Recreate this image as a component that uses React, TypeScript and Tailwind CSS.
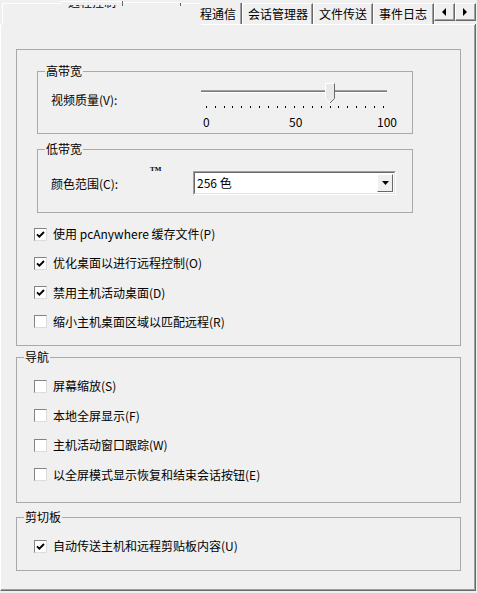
import React from "react";

const FONT = "font-['Noto_Sans_CJK_SC','Microsoft_YaHei',sans-serif]";

function CheckBox({ checked }: { checked?: boolean }) {
  return (
    <span className="w-[13px] h-[13px] shrink-0 bg-white border border-t-[#838383] border-l-[#838383] border-r-[#dcdcdc] border-b-[#dcdcdc] flex items-center justify-center">
      {checked && (
        <svg width="9" height="9" viewBox="0 0 9 9">
          <path d="M1 4.3 L3.4 6.7 L8 2" fill="none" stroke="#000" strokeWidth="1.9" />
        </svg>
      )}
    </span>
  );
}

function CheckRow({ label, checked }: { label: string; checked?: boolean }) {
  return (
    <div className="h-[16px] flex items-center gap-[6px] pl-[17px]">
      <CheckBox checked={checked} />
      <span className="whitespace-nowrap">{label}</span>
    </div>
  );
}

function GroupBox({
  title,
  className,
  children,
}: {
  title?: string;
  className?: string;
  children?: React.ReactNode;
}) {
  return (
    <div className={`relative border border-[#a9a9a9] ${className ?? ""}`}>
      {title && (
        <span className="absolute left-[7px] top-[-9px] px-px bg-[#f0f0f0] whitespace-nowrap">
          {title}
        </span>
      )}
      {children}
    </div>
  );
}

function Tab({ label, className }: { label: string; className: string }) {
  return (
    <div
      className={`h-[21px] flex items-center border-t border-l border-white border-r border-r-[#696969] shadow-[inset_-1px_0_0_#a0a0a0] whitespace-nowrap ${className}`}
    >
      {label}
    </div>
  );
}

function ArrowButton({ dir }: { dir: "left" | "right" }) {
  return (
    <div className="w-[21px] h-[18px] mb-[3px] flex items-center justify-center border-t border-l border-white border-r border-b border-r-[#696969] border-b-[#696969] shadow-[inset_-1px_-1px_0_#a0a0a0]">
      <svg width="5" height="8" viewBox="0 0 5 8">
        {dir === "left" ? (
          <path d="M4 0 L0 4 L4 8 Z" fill="#000" />
        ) : (
          <path d="M0 0 L4 4 L0 8 Z" fill="#000" />
        )}
      </svg>
    </div>
  );
}

function Slider() {
  const ticks = Array.from({ length: 21 }, (_, i) => 7 + i * 8.83);
  return (
    <div className="relative w-[200px] h-[52px] mt-[7px]">
      <svg width="200" height="32" viewBox="0 0 200 32" className="absolute left-0 top-0">
        <rect x="2" y="11" width="186" height="1" fill="#a0a0a0" />
        <rect x="2" y="12" width="186" height="1" fill="#7a7a7a" />
        <rect x="2" y="13" width="186" height="1" fill="#ffffff" />
        {ticks.map((x, i) => (
          <rect key={i} x={Math.round(x)} y="27" width="1" height="2" fill="#000" />
        ))}
        <path d="M126.5 4.5 H135.5 V19.5 L131 24 L126.5 19.5 Z" fill="#e9e9e9" stroke="#ffffff" />
        <path d="M135.5 4.5 V19.5 L131 24" fill="none" stroke="#696969" />
      </svg>
      <span className="absolute left-[4px] top-[35px] leading-[16px]">0</span>
      <span className="absolute left-[90px] top-[35px] leading-[16px]">50</span>
      <span className="absolute left-[178px] top-[35px] leading-[16px]">100</span>
    </div>
  );
}

function ComboBox({ value }: { value: string }) {
  return (
    <div className="w-[203px] h-[24px] mt-[21px] flex border border-t-[#a0a0a0] border-l-[#a0a0a0] border-r-white border-b-white">
      <div className="flex-1 flex bg-white border border-t-[#696969] border-l-[#696969] border-r-[#e3e3e3] border-b-[#e3e3e3] p-px">
        <span className="flex-1 pl-[1px] leading-[18px]">{value}</span>
        <div className="w-[16px] h-[18px] flex items-center justify-center bg-[#f0f0f0] border-t border-l border-white border-r border-b border-r-[#696969] border-b-[#696969]">
          <svg width="7" height="4" viewBox="0 0 7 4">
            <path d="M0 0 H7 L3.5 4 Z" fill="#000" />
          </svg>
        </div>
      </div>
    </div>
  );
}

export default function App() {
  return (
    <div className={`w-[477px] h-[593px] overflow-hidden bg-[#f0f0f0] text-black text-[12px] leading-[16px] ${FONT}`}>
      {/* tab strip */}
      <div className="relative h-[24px] flex items-end">
        <div className="w-[200px] h-full shrink-0">
          <div className="absolute left-[2px] top-[3px] w-px h-[21px] bg-white" />
          <div className="absolute left-[2px] top-[3px] w-[59px] h-px bg-white" />
          <div className="absolute left-[61px] top-[1px] w-[61px] h-px bg-white" />
          <div className="absolute left-[122px] top-[1px] w-px h-[5px] bg-[#696969]" />
          <div className="absolute left-[68px] top-[5px] w-[48px] h-[3px] overflow-hidden">
            <span className="absolute left-0 top-[-11px] whitespace-nowrap">远程控制</span>
          </div>
          <div className="absolute left-[123px] top-[2px] w-[57px] h-px bg-white" />
          <div className="absolute left-[180px] top-[3px] w-px h-[3px] bg-[#696969]" />
          <div className="absolute left-[182px] top-[3px] w-[18px] h-px bg-white" />
        </div>
        <div className="w-[42px] h-[21px] flex items-center justify-end pr-[5px] border-r border-r-[#696969] shadow-[inset_-1px_0_0_#a0a0a0] whitespace-nowrap">
          程通信
        </div>
        <Tab label="会话管理器" className="w-[71px] pl-[5px]" />
        <Tab label="文件传送" className="w-[60px] pl-[5px]" />
        <Tab label="事件日志" className="w-[61px] pl-[5px]" />
        <ArrowButton dir="left" />
        <ArrowButton dir="right" />
      </div>

      {/* page */}
      <div className="w-[476px] h-[567px] border-l border-white border-r border-b border-r-[#696969] border-b-[#696969] shadow-[inset_-1px_-1px_0_#a0a0a0]">
        <div className="flex h-px">
          <div className="w-[1px] bg-white" />
          <div className="w-[199px]" />
          <div className="flex-1 bg-white" />
        </div>

        <div className="pl-[15px] pt-[24px]">
          <GroupBox className="w-[445px] h-[297px] pt-[21px] pl-[20px]">
            <GroupBox title="高带宽" className="w-[376px] h-[63px] flex items-start">
              <span className="mt-[20px] pl-[13px] w-[161px] whitespace-nowrap">视频质量(V):</span>
              <Slider />
            </GroupBox>

            <GroupBox title="低带宽" className="w-[376px] h-[64px] mt-[15px] flex items-start">
              <span className="absolute left-[112px] top-[15px] text-[7px] leading-[8px] font-bold font-['Liberation_Serif',serif]">
                TM
              </span>
              <span className="mt-[26px] pl-[13px] w-[155px] whitespace-nowrap">颜色范围(C):</span>
              <ComboBox value="256 色" />
            </GroupBox>

            <div className="-ml-[20px] mt-[13px] flex flex-col gap-[13.33px]">
              <CheckRow label="使用 pcAnywhere 缓存文件(P)" checked />
              <CheckRow label="优化桌面以进行远程控制(O)" checked />
              <CheckRow label="禁用主机活动桌面(D)" checked />
              <CheckRow label="缩小主机桌面区域以匹配远程(R)" />
            </div>
          </GroupBox>

          <GroupBox title="导航" className="w-[445px] h-[146px] mt-[11px] pt-[20px]">
            <div className="flex flex-col gap-[13.67px]">
              <CheckRow label="屏幕缩放(S)" />
              <CheckRow label="本地全屏显示(F)" />
              <CheckRow label="主机活动窗口跟踪(W)" />
              <CheckRow label="以全屏模式显示恢复和结束会话按钮(E)" />
            </div>
          </GroupBox>

          <GroupBox title="剪切板" className="w-[445px] h-[54px] mt-[14px] pt-[20px]">
            <CheckRow label="自动传送主机和远程剪贴板内容(U)" checked />
          </GroupBox>
        </div>
      </div>
    </div>
  );
}
